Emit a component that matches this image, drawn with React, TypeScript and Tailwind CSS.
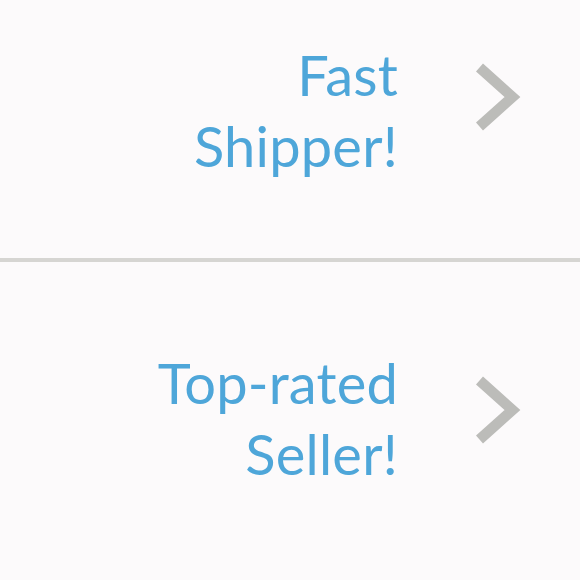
import React from "react";

function Chevron() {
  return (
    <svg width="50" height="70" viewBox="0 0 50 70" className="block shrink-0">
      <path
        d="M4.5 5.5 L37.5 35 L4.5 64.5"
        fill="none"
        stroke="#bcbcb9"
        strokeWidth="10.5"
        strokeLinecap="butt"
        strokeLinejoin="miter"
        strokeMiterlimit="10"
      />
    </svg>
  );
}

function Row({ lines, rowClass, chevClass }: { lines: string[]; rowClass: string; chevClass: string }) {
  return (
    <div className={`flex items-start shrink-0 ${rowClass}`}>
      <div
        className="w-[398px] shrink-0 text-right text-[56px] leading-[71px] text-[#4ea6d9] tracking-[0.2px]"
        style={{ fontFamily: "Lato, 'Open Sans', sans-serif" }}
      >
        {lines.map((l) => (
          <div key={l}>{l}</div>
        ))}
      </div>
      <div className={`ml-[77px] shrink-0 ${chevClass}`}>
        <Chevron />
      </div>
    </div>
  );
}

export default function App() {
  return (
    <div className="w-[580px] h-[580px] overflow-hidden bg-[#fcfafb] flex flex-col">
      <Row lines={["Fast", "Shipper!"]} rowClass="pt-[39px] h-[258px]" chevClass="mt-[23px]" />
      <div className="h-[4px] shrink-0 bg-[#d6d5d2]" />
      <Row lines={["Top-rated", "Seller!"]} rowClass="pt-[85px] h-[318px]" chevClass="mt-[28px]" />
    </div>
  );
}
